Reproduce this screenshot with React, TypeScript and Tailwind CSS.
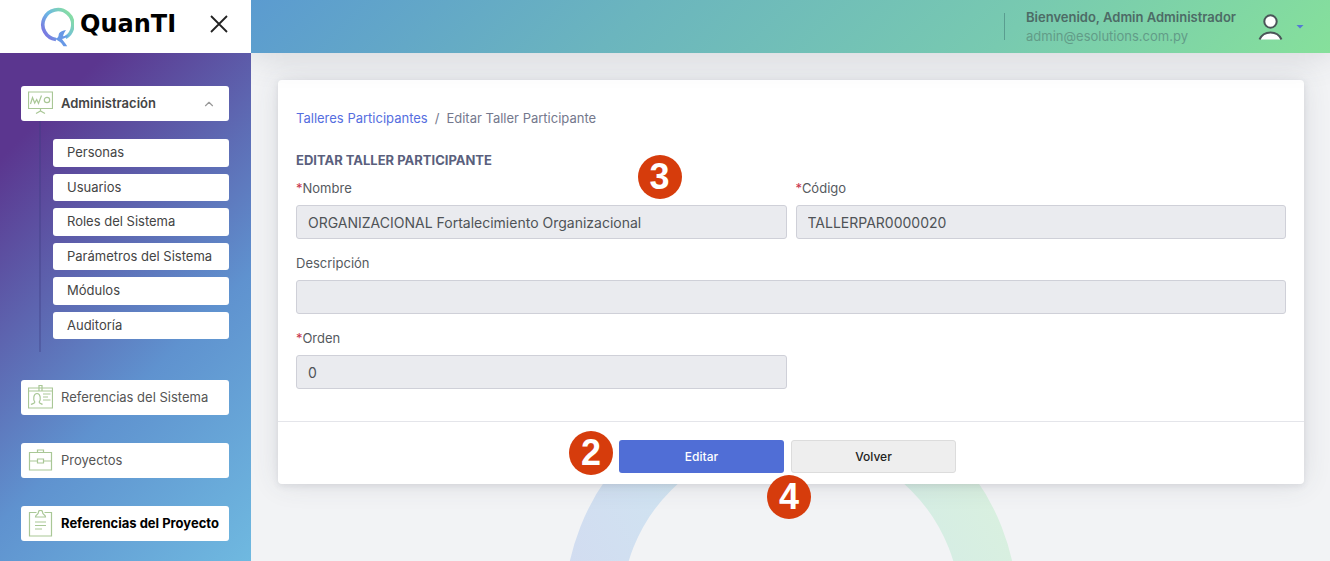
import type { ReactNode } from "react";
import { ChevronUp } from "lucide-react";
import clsx from "clsx";

const SUBMENU = [
  "Personas",
  "Usuarios",
  "Roles del Sistema",
  "Parámetros del Sistema",
  "Módulos",
  "Auditoría",
];

function MenuIcon({ children }: { children: ReactNode }) {
  return (
    <svg viewBox="0 0 25 28" fill="none" stroke="#a9c796" strokeWidth="1.200" className="h-7 w-[25px] shrink-0" aria-hidden="true">
      {children}
    </svg>
  );
}

function BoardIcon() {
  return (
    <MenuIcon>
      <path d="M.5 2h24v16.500H.5zM12.500 18.500v2.500M8 23.500l4.500-2.500 4.500 2.500" />
      <path d="M2.500 14l2-6.500 2.200 5.500 2-3.500 1.800 4 3-8" />
      <circle cx="19" cy="10" r="2.700" />
    </MenuIcon>
  );
}

function IdCardIcon() {
  return (
    <MenuIcon>
      <path d="M.5 4h24v20H.5zM.5 7h10.500M14 7h10.500M11 1.500h3v5.500h-3z" />
      <path d="M3 20.500c1.500-1.200 4-.8 3.800-2.500C5 15.500 5.300 9.500 9 9.500s4 6 2.200 8.500c-.2 1.700 2.300 1.300 3.300 2.500" />
      <path d="M15 10h7.500M15 13h5M15 16h7.500" />
    </MenuIcon>
  );
}

function BriefcaseIcon() {
  return (
    <MenuIcon>
      <path d="M1.500 5.500h22v17.500h-22zM9.500 5.500V3h6v2.500M1.500 14h8M15.500 14h8M9.500 12h6v4h-6z" />
    </MenuIcon>
  );
}

function ClipboardIcon() {
  return (
    <MenuIcon>
      <path d="M8.500 2.500h-7v23.500h22V2.500h-7" />
      <path d="M7.500 7c0-2.500 3-2 3-5 0-2.200 4-2.200 4 0 0 3 3 2.500 3 5z" />
      <path d="M7 12h11M7 15.500h11M7 19h7" />
    </MenuIcon>
  );
}

// Ring with the arrow tail at the bottom
function LogoMark() {
  return (
    <svg viewBox="0 -6 34 46" fill="none" className="h-[46px] w-[34px]" aria-hidden="true">
      <defs>
        <linearGradient id="mark" x1="3" y1="28" x2="30" y2="8" gradientUnits="userSpaceOnUse">
          <stop offset="0" stopColor="#7b6fe0" />
          <stop offset=".5" stopColor="#6cb8e4" />
          <stop offset="1" stopColor="#86dca6" />
        </linearGradient>
      </defs>
      <path d="M16 32.500A15 15 0 1 1 25.500 30.500" stroke="url(#mark)" strokeWidth="3.600" />
      <path d="M26 23c-3 .5-6 1.500-7 3.500-.5 1.500-.2 3-1.500 4.200l-2.500 1 3.500 2.300c2.500.8 3.500 3.500 5 5.200h3.700c-1.500-2.500-3.700-4.700-5.200-7.200 2.500-.5 5-2 7-4-2 .5-4 1.200-6 1.200.5-2.500 2-4.500 3-6.200z" fill="#6798e6" />
    </svg>
  );
}

function NavItem({ icon, label, open, active }: { icon: ReactNode; label: string; open?: boolean; active?: boolean }) {
  return (
    <button
      type="button"
      aria-expanded={open}
      className={clsx(
        "flex h-[35px] w-full items-center gap-2 rounded-[3px] bg-white pl-[7px] pr-[13px] text-left text-[13px]",
        open && "font-semibold text-[#444]",
        active && "font-bold text-black",
        !open && !active && "text-[#555]"
      )}
    >
      {icon}
      <span className="flex-1 whitespace-nowrap">{label}</span>
      {open && <ChevronUp className="size-[14px] text-[#999]" />}
    </button>
  );
}

function Sidebar() {
  return (
    <aside className="z-10 flex w-[251px] shrink-0 flex-col">
      <div className="flex h-[53px] items-center bg-white pb-1.5 pl-10 pr-[22px]">
        <LogoMark />
        <span className="ml-1.5 font-['DejaVu_Sans'] text-[24px] leading-none font-bold text-black">QuanTI</span>
        <button type="button" aria-label="Cerrar menú" className="ml-auto">
          <svg viewBox="0 0 20 20" stroke="#222" strokeWidth="1.800" className="size-5">
            <path d="M2 2l16 16M18 2L2 18" />
          </svg>
        </button>
      </div>
      <nav className="flex flex-1 flex-col gap-7 bg-[linear-gradient(135deg,#5b368f_14%,#5f92cf_62%,#6fb9e0_100%)] px-[21px] pt-[33px] pr-[22px] pb-5">
        <div>
          <NavItem icon={<BoardIcon />} label="Administración" open />
          <div className="ml-[18px] border-l-2 border-[#3c3c82]/35 pt-[18px] pb-[13px] pl-3">
            <ul className="grid h-[200px] grid-rows-6 gap-[7px]">
              {SUBMENU.map((item) => (
                <li key={item} className="flex">
                  <a href="#" className="flex flex-1 items-center rounded-[3px] bg-white pl-3.5 text-[13px] text-[#444]">
                    {item}
                  </a>
                </li>
              ))}
            </ul>
          </div>
        </div>
        <NavItem icon={<IdCardIcon />} label="Referencias del Sistema" />
        <NavItem icon={<BriefcaseIcon />} label="Proyectos" />
        <NavItem icon={<ClipboardIcon />} label="Referencias del Proyecto" active />
      </nav>
    </aside>
  );
}

function TopBar() {
  return (
    <header className="z-[5] flex h-[53px] items-center justify-end bg-[linear-gradient(135deg,#5b9bd0_0%,#6bb5be_35%,#78cab0_70%,#86e09b_100%)] pr-[26px] shadow-[0_0_36px_rgba(70,73,88,0.2)]">
      <div className="flex h-[27px] items-center border-l border-[#5a9d90] pl-[21px]">
        <div className="text-[13px] leading-[19px]">
          <p className="font-semibold text-[#4d6b66]">Bienvenido, Admin Administrador</p>
          <p className="text-[#629c88]">admin@esolutions.com.py</p>
        </div>
      </div>
      <button type="button" aria-label="Cuenta" className="ml-[22px] flex items-center gap-[13px]">
        <svg viewBox="0 0 25 28" fill="#fff" stroke="#4a5558" strokeWidth="2" className="h-7 w-[25px]">
          <circle cx="12.500" cy="8.500" r="6.200" />
          <path d="M1.500 26.500c2-4.500 6-7 11-7s9 2.500 11 7" />
        </svg>
        <svg viewBox="0 0 8 4" className="h-1 w-2">
          <path d="M.5 0h7L4 3.500z" fill="#5578d4" />
        </svg>
      </button>
    </header>
  );
}

function Step({ n, className }: { n: number; className: string }) {
  return (
    <span
      className={clsx(
        "absolute flex size-11 items-center justify-center rounded-full bg-[#d63c0c] font-['Liberation_Sans'] text-[36px] leading-none font-bold text-white",
        className
      )}
    >
      {n}
    </span>
  );
}

function Field({ id, label, value, required, className }: { id: string; label: string; value: string; required?: boolean; className?: string }) {
  return (
    <div className={className}>
      <label htmlFor={id} className="mb-[7px] block text-[13px] leading-5 text-[#555a60]">
        {required && <span className="text-[#c8324b]">*</span>}
        {label}
      </label>
      <input
        id={id}
        readOnly
        value={value}
        className="block h-[34px] w-full rounded-[3px] border border-[#cfd0d8] bg-[#eaebef] px-[11px] text-[14px] text-[#4f5357] outline-none"
      />
    </div>
  );
}

function BackgroundRing() {
  return (
    <svg viewBox="0 0 454 454" fill="none" className="absolute top-[330px] left-1/2 w-[454px] -translate-x-1/2" aria-hidden="true">
      <defs>
        <linearGradient id="ring" x1="0" y1="300" x2="420" y2="80" gradientUnits="userSpaceOnUse">
          <stop offset="0" stopColor="#d3d9f0" />
          <stop offset=".35" stopColor="#d0e2f1" />
          <stop offset=".75" stopColor="#d4ece6" />
          <stop offset="1" stopColor="#d9f0df" />
        </linearGradient>
      </defs>
      <circle cx="227" cy="227" r="198" stroke="url(#ring)" strokeWidth="57" />
    </svg>
  );
}

export default function App() {
  return (
    <div className="flex min-h-screen bg-[#f2f3f5] font-['Inter',sans-serif]">
      <Sidebar />
      <div className="flex min-w-0 flex-1 flex-col">
        <TopBar />
        <main className="relative flex-1 overflow-hidden px-[27px] pt-[27px] pr-[26px] pb-10">
          <BackgroundRing />
          <form className="relative rounded-[4px] bg-white shadow-[0_2px_6px_rgba(60,63,80,0.1),0_0_28px_rgba(60,63,80,0.12)]">
            <div className="px-[18px] pt-7 pb-8">
              <nav aria-label="Ruta" className="flex gap-[7px] text-[13px] leading-5 text-[#74788d]">
                <a href="#" className="text-[#556ee0]">Talleres Participantes</a>
                <span>/</span>
                <span>Editar Taller Participante</span>
              </nav>
              <h1 className="mt-[22px] mb-2 text-[13px] leading-5 font-bold text-[#5a5f7d]">EDITAR TALLER PARTICIPANTE</h1>
              <div className="grid grid-cols-2 gap-x-[9px] gap-y-3.5">
                <div className="relative">
                  <Field id="nombre" label="Nombre" value="ORGANIZACIONAL Fortalecimiento Organizacional" required />
                  <Step n={3} className="-top-[23px] right-[105px]" />
                </div>
                <Field id="codigo" label="Código" value="TALLERPAR0000020" required />
                <Field id="descripcion" label="Descripción" value="" className="col-span-2" />
                <Field id="orden" label="Orden" value="0" required />
              </div>
            </div>
            <div className="flex justify-center gap-[7px] border-t border-[#e4e5ea] pt-[18px] pr-[7px] pb-[11px] text-[12px] font-medium">
              <div className="relative">
                <button type="button" className="h-[33px] w-[165px] rounded-[3px] bg-[#506ed6] text-white">Editar</button>
                <Step n={2} className="-top-[9px] -left-[50px]" />
                <Step n={4} className="top-[35px] -right-[27px]" />
              </div>
              <button type="button" className="h-[33px] w-[165px] rounded-[3px] border border-[#dcdcdc] bg-[#eee] text-[#222]">Volver</button>
            </div>
          </form>
        </main>
      </div>
    </div>
  );
}
